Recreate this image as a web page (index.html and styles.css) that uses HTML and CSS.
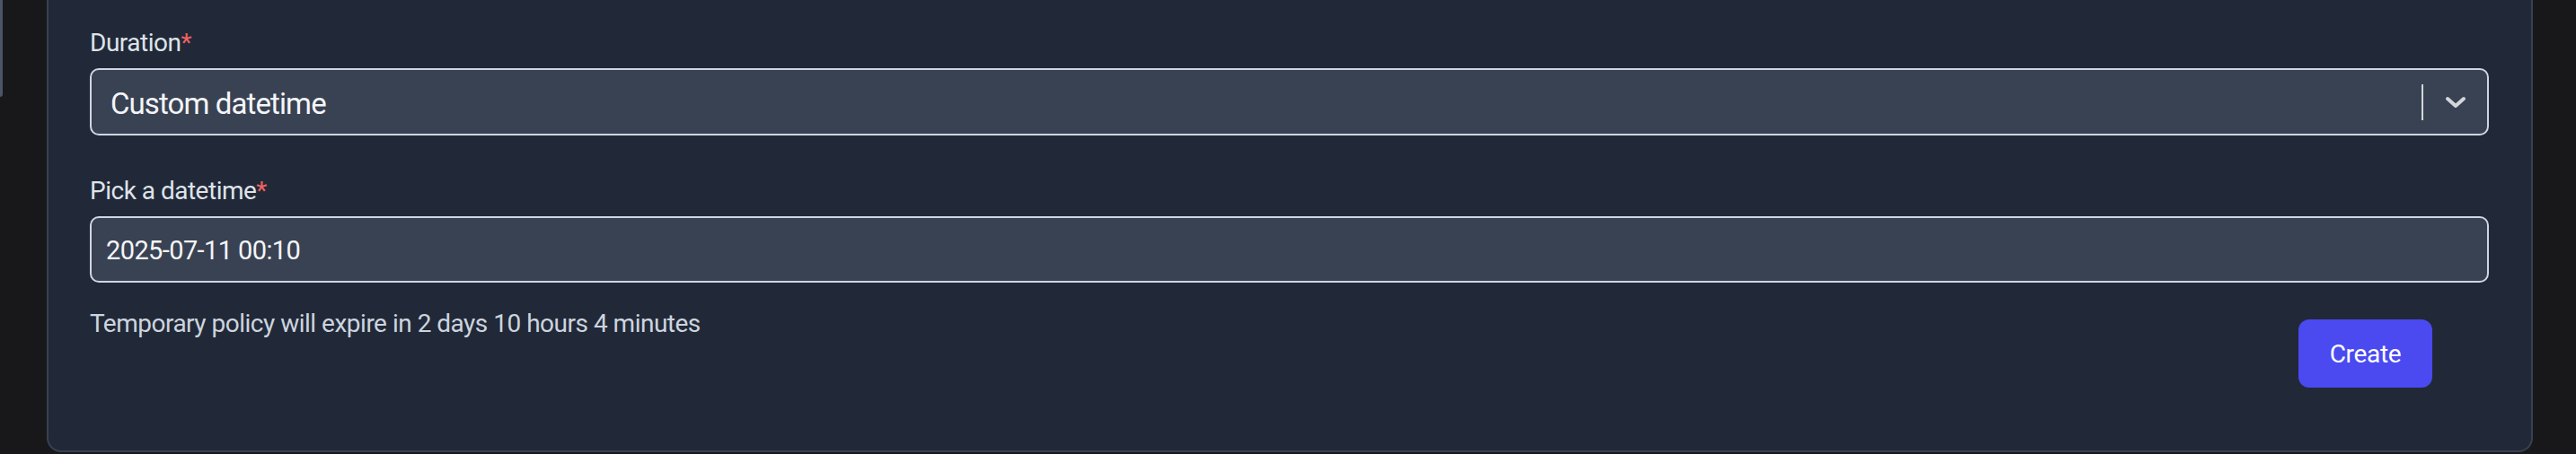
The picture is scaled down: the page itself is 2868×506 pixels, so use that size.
FILE: index.html
```html
<!DOCTYPE html>
<html lang="en">
<head>
    <meta charset="UTF-8">
    <meta name="viewport" content="width=device-width, initial-scale=1.0">
    <title>Temporary policy</title>
    <link rel="stylesheet" href="styles.css">
</head>
<body>
    <div class="side-stub"></div>

    <div class="panel">
        <div class="field">
            <label class="field-label">Duration<span class="required">*</span></label>
            <div class="select">
                <span class="select-value">Custom datetime</span>
                <div class="select-indicators">
                    <span class="select-separator"></span>
                    <svg class="chevron" width="24" height="14" viewBox="0 0 24 14">
                        <path d="M3 3 L12 11 L21 3" fill="none" stroke="#d4d6da" stroke-width="4" stroke-linecap="round" stroke-linejoin="round"/>
                    </svg>
                </div>
            </div>
        </div>

        <div class="field">
            <label class="field-label" for="datetime">Pick a datetime<span class="required">*</span></label>
            <input class="text-input" id="datetime" type="text" value="2025-07-11 00:10">
        </div>

        <div class="footer-row">
            <p class="hint">Temporary policy will expire in 2 days 10 hours 4 minutes</p>
            <button class="button" type="button">Create</button>
        </div>
    </div>
</body>
</html>
```

FILE: styles.css
```css
body {
    display: flex;
    align-items: flex-start;
    margin: 0;
    height: 506px;
    background-color: #18181a;
    font-family: Roboto, "Liberation Sans", sans-serif;
    letter-spacing: -0.5px;
    overflow: hidden;
}
.side-stub {
    width: 3px;
    height: 108px;
    background-color: #4b5568;
    border-bottom-right-radius: 6px;
}
.panel {
    box-sizing: border-box;
    width: 2768px;
    margin-left: 49px;
    padding: 28px 47px 70px 46px;
    background-color: #212938;
    border: 2px solid #394152;
    border-top: none;
    border-radius: 0 0 16px 16px;
}
.field {
    display: flex;
    flex-direction: column;
    margin-bottom: 42px;
}
.field + .field {
    margin-bottom: 26px;
}
.field-label {
    font-size: 28px;
    line-height: 40px;
    color: #dfe3ea;
    margin-bottom: 8px;
}
.required {
    color: #f06262;
}
.select {
    box-sizing: border-box;
    display: flex;
    align-items: center;
    height: 75px;
    padding-left: 21px;
    background-color: #394253;
    border: 2px solid #cfd6e2;
    border-radius: 10px;
}
.select-value {
    flex: 1;
    font-size: 33px;
    letter-spacing: -0.9px;
    padding-top: 3px;
    color: #f4f5f7;
}
.select-indicators {
    display: flex;
    align-items: center;
    padding-right: 23px;
}
.select-separator {
    width: 2px;
    height: 40px;
    background-color: #d4d6da;
    margin-right: 24px;
}
.chevron {
    display: block;
}
.text-input {
    box-sizing: border-box;
    height: 74px;
    padding: 2px 16px 0;
    background-color: #394253;
    border: 2px solid #cfd6e2;
    border-radius: 10px;
    font-family: inherit;
    font-size: 29px;
    letter-spacing: -0.6px;
    color: #f4f5f7;
    outline: none;
}
.footer-row {
    display: flex;
    justify-content: space-between;
    align-items: flex-start;
}
.hint {
    margin: 0;
    font-size: 28px;
    line-height: 40px;
    color: #cdd4df;
}
.button {
    width: 149px;
    height: 76px;
    margin-top: 15px;
    margin-right: 63px;
    padding-top: 2px;
    background-color: #4a4af0;
    border: none;
    border-radius: 12px;
    font-family: inherit;
    font-size: 28px;
    letter-spacing: -0.3px;
    color: #ffffff;
}
```
